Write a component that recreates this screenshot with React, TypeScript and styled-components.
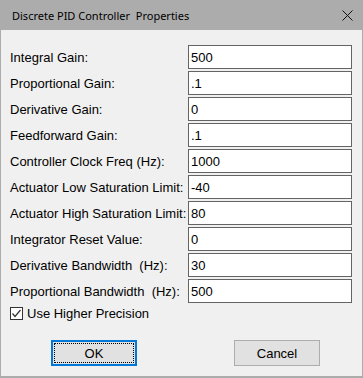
import { Fragment } from "react";
import styled, { createGlobalStyle } from "styled-components";

const GlobalStyle = createGlobalStyle`
  html, body {
    margin: 0;
    padding: 0;
    background: #f0f0f0;
  }
`;

const Window = styled.div`
  width: 363px;
  height: 378px;
  box-sizing: border-box;
  border: 1px solid #acacac;
  border-top: none;
  border-bottom-width: 2px;
  background: #f0f0f0;
  display: flex;
  flex-direction: column;
  font-family: "Liberation Sans", Arial, sans-serif;
  font-size: 13px;
  color: #000;
`;

const TitleBar = styled.div`
  height: 30px;
  margin: 0 -1px;
  background: #acacac;
  display: flex;
  align-items: center;
  justify-content: space-between;
  padding: 0 10px 0 12px;
  font-family: "Noto Sans", "Open Sans", sans-serif;
  font-size: 11px;
  color: #000;
`;

const Title = styled.span`
  white-space: pre;
`;

const Body = styled.div`
  padding: 15px 10px 0 8px;
  display: flex;
  flex-direction: column;
`;

const Form = styled.div`
  display: grid;
  grid-template-columns: 179px 164px;
  grid-auto-rows: 24px;
  row-gap: 2px;
`;

const Label = styled.label`
  display: flex;
  align-items: center;
  padding-left: 1px;
  white-space: pre;
`;

const Field = styled.input`
  box-sizing: border-box;
  width: 164px;
  height: 24px;
  margin: 0;
  border: 1px solid #646464;
  background: #fff;
  padding: 0 2px;
  font-family: "Liberation Sans", Arial, sans-serif;
  font-size: 13px;
  color: #000;
  outline: none;
`;

const CheckRow = styled.label`
  display: flex;
  align-items: center;
  gap: 4px;
  height: 20px;
  padding-left: 1px;
`;

const Box = styled.span`
  width: 13px;
  height: 13px;
  box-sizing: border-box;
  border: 1px solid #333;
  background: #fff;
  display: flex;
  align-items: center;
  justify-content: center;
`;

const Buttons = styled.div`
  display: flex;
  justify-content: space-between;
  padding: 0 32px 0 42px;
  margin-top: 17px;
`;

const Button = styled.button<{ $default?: boolean }>`
  width: 86px;
  height: 26px;
  box-sizing: border-box;
  margin: 0;
  background: #e1e1e1;
  border: ${(p) => (p.$default ? "2px solid #0078d7" : "1px solid #adadad")};
  font-family: "Liberation Sans", Arial, sans-serif;
  font-size: 13px;
  color: #000;
  padding: 0;
  position: relative;

  ${(p) =>
    p.$default &&
    `
    &::after {
      content: "";
      position: absolute;
      inset: 1px;
      border: 1px dotted #000;
    }
  `}
`;

const fields = [
  ["Integral Gain:", "500"],
  ["Proportional Gain:", ".1"],
  ["Derivative Gain:", "0"],
  ["Feedforward Gain:", ".1"],
  ["Controller Clock Freq (Hz):", "1000"],
  ["Actuator Low Saturation Limit:", "-40"],
  ["Actuator High Saturation Limit:", "80"],
  ["Integrator Reset Value:", "0"],
  ["Derivative Bandwidth  (Hz):", "30"],
  ["Proportional Bandwidth  (Hz):", "500"],
];

export default function App() {
  return (
    <>
      <GlobalStyle />
      <Window>
        <TitleBar>
          <Title>Discrete PID Controller  Properties</Title>
          <svg width="11" height="11" viewBox="0 0 11 11">
            <path d="M0.5 0.5 L10.5 10.5 M10.5 0.5 L0.5 10.5" stroke="#111" strokeWidth="1" fill="none" />
          </svg>
        </TitleBar>
        <Body>
          <Form>
            {fields.map(([label, value]) => (
              <Fragment key={label}>
                <Label>{label}</Label>
                <Field defaultValue={value} />
              </Fragment>
            ))}
          </Form>
          <CheckRow>
            <Box>
              <svg width="11" height="11" viewBox="0 0 11 11">
                <path d="M1.5 5.5 L4 8.5 L9.5 2" stroke="#333" strokeWidth="1.2" fill="none" />
              </svg>
            </Box>
            Use Higher Precision
          </CheckRow>
          <Buttons>
            <Button $default>OK</Button>
            <Button>Cancel</Button>
          </Buttons>
        </Body>
      </Window>
    </>
  );
}
